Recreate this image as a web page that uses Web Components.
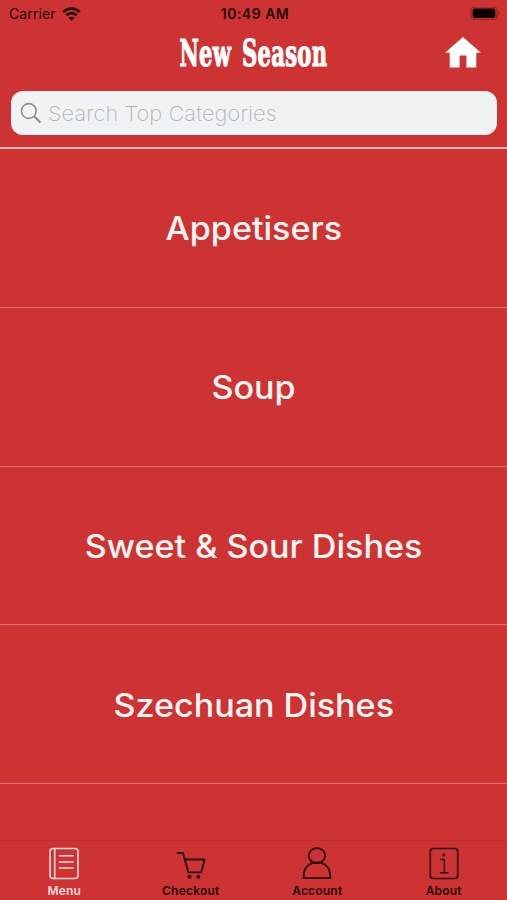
<!DOCTYPE html>
<html lang="en">
<head>
<meta charset="utf-8">
<meta name="viewport" content="width=device-width, initial-scale=1">
<title>New Season</title>
<style>
  body {
    margin: 0;
    background: #cd3333;
    font-family: Inter, "Liberation Sans", sans-serif;
  }
</style>
</head>
<body>
<menu-app>
  <status-bar slot="top" carrier="Carrier" time="10:49 AM"></status-bar>
  <title-bar slot="top">New Season</title-bar>
  <search-field slot="top">Search Top Categories</search-field>
  <category-row>Appetisers</category-row>
  <category-row>Soup</category-row>
  <category-row>Sweet &amp; Sour Dishes</category-row>
  <category-row>Szechuan Dishes</category-row>
  <tab-item slot="tabs" icon="menu" active>Menu</tab-item>
  <tab-item slot="tabs" icon="cart">Checkout</tab-item>
  <tab-item slot="tabs" icon="person">Account</tab-item>
  <tab-item slot="tabs" icon="info">About</tab-item>
</menu-app>

<template id="menu-app">
  <style>
    :host {
      display: flex;
      flex-direction: column;
      height: 900px;
      overflow: hidden;
    }
    header {
      flex: none;
      box-sizing: border-box;
      height: 149px;
      border-bottom: 2px solid #f3b9b9;
    }
    main {
      flex: 1;
      overflow: hidden;
    }
    nav {
      flex: none;
      display: grid;
      grid-template-columns: repeat(4, 1fr);
      box-sizing: border-box;
      height: 60px;
      padding-left: 1px;
      border-top: 1px solid #b92e2e;
    }
  </style>
  <header><slot name="top"></slot></header>
  <main><slot></slot></main>
  <nav><slot name="tabs"></slot></nav>
</template>

<template id="status-bar">
  <style>
    :host {
      display: grid;
      grid-template-columns: 1fr auto 1fr;
      align-items: center;
      box-sizing: border-box;
      height: 28px;
      padding: 0 6px 0 9px;
      color: #250606;
      font-size: 14px;
      line-height: 28px;
    }
    .left {
      display: flex;
      align-items: center;
      gap: 6px;
      letter-spacing: 0.1px;
    }
    .time {
      font-weight: 600;
      letter-spacing: 0.5px;
    }
    .battery {
      justify-self: end;
    }
    svg {
      display: block;
    }
  </style>
  <div class="left">
    <span class="carrier"></span>
    <svg width="19" height="14" viewBox="0 0 19 14" fill="none" stroke="currentColor" stroke-width="2.7">
      <path d="M1.3 5.1C5.7.4 13.3.4 17.7 5.1M4.3 8.2c2.9-2.9 7.5-2.9 10.4 0"/>
      <path d="M9.5 13.8 6.6 10.9c1.6-1.6 4.2-1.6 5.8 0z" fill="currentColor" stroke="none"/>
    </svg>
  </div>
  <span class="time"></span>
  <svg class="battery" width="31" height="15" viewBox="0 0 31 15">
    <rect x="1" y="0" width="26" height="12.5" rx="3.5" fill="none" stroke="#8c2222" stroke-width="1.1"/>
    <rect x="2.7" y="1.6" width="22.6" height="9.3" rx="2" fill="#080000"/>
    <path d="M28.5 4.3c1.8.5 1.8 3.4 0 3.9z" fill="#8c2222"/>
  </svg>
</template>

<template id="title-bar">
  <style>
    :host {
      display: grid;
      grid-template-columns: 1fr auto 1fr;
      align-items: center;
      box-sizing: border-box;
      height: 63px;
      padding: 0 26px 14px;
      color: #fff;
    }
    h1 {
      grid-column: 2;
      width: 151px;
      margin: 0;
      display: flex;
      justify-content: center;
      font: bold 37px/48px "DejaVu Serif Condensed", "DejaVu Serif", serif;
      white-space: nowrap;
    }
    /* Squeezed to get a condensed display face. */
    h1 span {
      flex: none;
      transform: scaleX(0.635);
      letter-spacing: 0.4px;
      word-spacing: 5px;
      -webkit-text-stroke: 1.1px #fff;
    }
    svg {
      display: block;
      justify-self: end;
    }
  </style>
  <h1><span><slot></slot></span></h1>
  <svg width="36" height="32" viewBox="0 0 36 32" fill="currentColor">
    <path d="M18 0 36 15.700h-4.7V30.500H21.4V18.500h-6.8v12H4.7V15.700H0z"/>
  </svg>
</template>

<template id="search-field">
  <style>
    :host {
      display: flex;
      align-items: center;
      gap: 6px;
      box-sizing: border-box;
      height: 44px;
      margin: 0 10px 0 11px;
      padding-left: 9px;
      border-radius: 12px;
      background: #eff3f6;
      color: #b0b3b6;
      font-size: 20.5px;
      font-weight: 200;
      letter-spacing: 0.1px;
    }
    svg {
      flex: none;
    }
    span {
      transform: scaleX(1.06);
      transform-origin: left;
    }
  </style>
  <svg width="22" height="22" viewBox="0 0 22 22" fill="none" stroke="#8b8e91" stroke-width="1.6">
    <circle cx="8.8" cy="9" r="7.4"/>
    <path d="m14.2 14.3 6.2 6.2" stroke-width="2"/>
  </svg>
  <span><slot></slot></span>
</template>

<template id="category-row">
  <style>
    :host {
      display: flex;
      align-items: center;
      justify-content: center;
      box-sizing: border-box;
      height: 158.8px;
      padding-top: 2px;
      border-bottom: 1px solid #dc7070;
      color: #fff6f4;
      font-size: 32px;
      font-weight: 500;
    }
    /* Widened towards a geometric face. */
    span {
      transform: scaleX(1.065);
    }
  </style>
  <span><slot></slot></span>
</template>

<template id="tab-item">
  <style>
    :host {
      display: flex;
      flex-direction: column;
      align-items: center;
      color: #260606;
      font-size: 12px;
      font-weight: 600;
      letter-spacing: 0.2px;
      line-height: 16px;
    }
    :host([active]) {
      color: #fbdcdc;
    }
    svg {
      display: block;
      margin: 4px 0 2px;
    }
  </style>
  <svg width="36" height="36" viewBox="0 0 36 36" fill="none" stroke="currentColor" stroke-width="1.6" stroke-linecap="round" stroke-linejoin="round"></svg>
  <slot></slot>
</template>

<script>
  const icons = {
    menu: '<rect x="4" y="3.5" width="28" height="30" rx="3"/><path d="M8.7 3.5v30M13.5 10.7h13.5M13.5 17h13.5M13.5 23h13.5"/>',
    cart: '<path d="M4.7 8h5.2l5.4 19.3h13l3.3-12.8H11.8" stroke-width="1.8"/><circle cx="16.5" cy="31.7" r="2" fill="currentColor" stroke="none"/><circle cx="25.3" cy="31.7" r="2" fill="currentColor" stroke="none"/>',
    person: '<g stroke-width="1.8"><ellipse cx="18" cy="10.6" rx="8.2" ry="7.4"/><path d="M13 18.2C7.5 20 4.5 24.3 4.5 33.2h27c0-8.9-3-13.2-8.5-15-3-.9-7-.9-10 0z"/></g>',
    info: '<rect x="4.3" y="3.5" width="27.4" height="30" rx="3"/><path d="M14.8 14.6h3.6v13M14.5 27.8h7.3" stroke-width="1.5"/><circle cx="17.8" cy="10" r="1.5" fill="currentColor" stroke="none"/>'
  }

  /**
   * Base for elements whose shadow root is cloned from the template
   * with the same id as the tag name.
   */
  class TemplateElement extends HTMLElement {
    constructor() {
      super()
      const template = document.getElementById(this.localName)
      this.attachShadow({ mode: 'open' })
        .appendChild(template.content.cloneNode(true))
    }
  }

  customElements.define('menu-app', class extends TemplateElement {})
  customElements.define('title-bar', class extends TemplateElement {})
  customElements.define('search-field', class extends TemplateElement {})
  customElements.define('category-row', class extends TemplateElement {})

  customElements.define('status-bar', class extends TemplateElement {
    connectedCallback() {
      this.shadowRoot.querySelector('.carrier').textContent = this.getAttribute('carrier')
      this.shadowRoot.querySelector('.time').textContent = this.getAttribute('time')
    }
  })

  customElements.define('tab-item', class extends TemplateElement {
    connectedCallback() {
      this.shadowRoot.querySelector('svg').innerHTML = icons[this.getAttribute('icon')]
    }
  })
</script>
</body>
</html>
